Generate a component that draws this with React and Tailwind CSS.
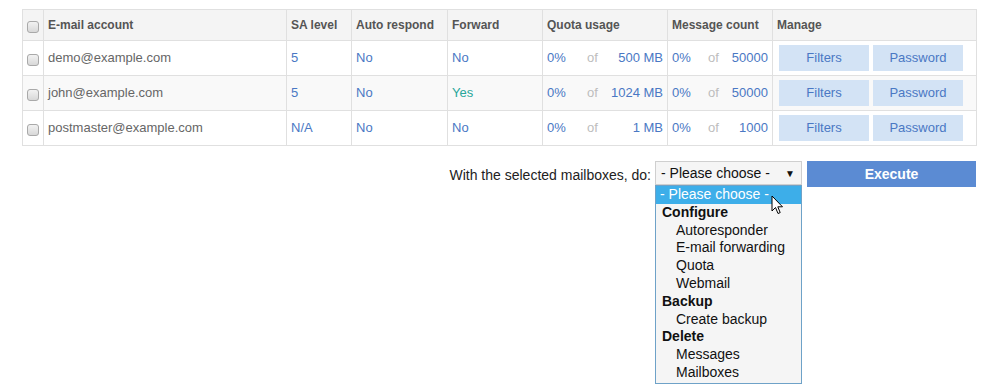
import { useState } from "react"

const mailboxes = [
  { id: 1, email: "demo@example.com", sa: "5", auto: "No", fwd: "No", quota: "500 MB", msgs: "50000" },
  { id: 2, email: "john@example.com", sa: "5", auto: "No", fwd: "Yes", quota: "1024 MB", msgs: "50000" },
  { id: 3, email: "postmaster@example.com", sa: "N/A", auto: "No", fwd: "No", quota: "1 MB", msgs: "1000" },
]

const options = [
  { label: "- Please choose -", type: "active" },
  { label: "Configure", type: "group" },
  { label: "Autoresponder", type: "item" },
  { label: "E-mail forwarding", type: "item" },
  { label: "Quota", type: "item" },
  { label: "Webmail", type: "item" },
  { label: "Backup", type: "group" },
  { label: "Create backup", type: "item" },
  { label: "Delete", type: "group" },
  { label: "Messages", type: "item" },
  { label: "Mailboxes", type: "item" },
]

function Checkbox() {
  return (
    <input
      type="checkbox"
      className="relative top-[1px] m-0 h-[12px] w-[12px] appearance-none rounded-[3px] border border-[#a9a9a9] bg-gradient-to-b from-[#f2f2f2] to-[#d8d8d8] align-middle"
    />
  )
}

function Usage({ used, total, wide }) {
  return (
    <div className="flex items-center">
      <span className={wide ? "w-[40px]" : "w-[36px]"}>{used}</span>
      <span className="text-[#bdbdbd]">of</span>
      <span className="flex-1 text-right">{total}</span>
    </div>
  )
}

function Cursor() {
  return (
    <svg className="absolute left-[115px] top-[9px]" width="13" height="21" viewBox="0 0 13 21">
      <path
        d="M1 1 L1 16 L4.5 12.5 L7 18.5 L9.2 17.6 L6.8 11.8 L11.5 11.8 Z"
        fill="#fff"
        stroke="#000"
        strokeWidth="1"
        strokeLinejoin="round"
      />
    </svg>
  )
}

export default function App() {
  const [checked] = useState({})

  return (
    <div className="min-h-screen bg-white font-['Liberation_Sans',Arial,sans-serif]">
      <div className="w-[976px] pl-[22px] pt-[9px]">
        <table className="w-[954px] table-fixed border-collapse text-[13px]">
          <colgroup>
            <col className="w-[21px]" />
            <col className="w-[243px]" />
            <col className="w-[65px]" />
            <col className="w-[96px]" />
            <col className="w-[95px]" />
            <col className="w-[125px]" />
            <col className="w-[105px]" />
            <col className="w-[204px]" />
          </colgroup>
          <thead>
            <tr className="h-[31px] bg-[#f4f4f4] text-left text-[12px] font-bold text-[#555]">
              <th className="border border-[#e0e0e0] pl-[4px]">
                <Checkbox />
              </th>
              <th className="border border-[#e0e0e0] px-[4px]">E-mail account</th>
              <th className="border border-[#e0e0e0] px-[4px]">SA level</th>
              <th className="border border-[#e0e0e0] px-[4px]">Auto respond</th>
              <th className="border border-[#e0e0e0] px-[4px]">Forward</th>
              <th className="border border-[#e0e0e0] px-[4px]">Quota usage</th>
              <th className="border border-[#e0e0e0] px-[4px]">Message count</th>
              <th className="border border-[#e0e0e0] px-[4px]">Manage</th>
            </tr>
          </thead>
          <tbody>
            {mailboxes.map((m, i) => (
              <tr key={m.id} className={`h-[35px] ${i % 2 === 1 ? "bg-[#f9f9f9]" : "bg-white"}`}>
                <td className="border border-[#e0e0e0] pl-[4px]">
                  <Checkbox defaultChecked={checked[m.id]} />
                </td>
                <td className="border border-[#e0e0e0] px-[4px] text-[#666]">{m.email}</td>
                <td className="border border-[#e0e0e0] px-[4px] text-[#4a78c4]">{m.sa}</td>
                <td className="border border-[#e0e0e0] px-[4px] text-[#4a78c4]">{m.auto}</td>
                <td
                  className={`border border-[#e0e0e0] px-[4px] ${
                    m.fwd === "Yes" ? "text-[#2aa79b]" : "text-[#4a78c4]"
                  }`}
                >
                  {m.fwd}
                </td>
                <td className="border border-[#e0e0e0] px-[4px] text-[#4a78c4]">
                  <Usage used="0%" total={m.quota} wide />
                </td>
                <td className="border border-[#e0e0e0] px-[4px] text-[#4a78c4]">
                  <Usage used="0%" total={m.msgs} />
                </td>
                <td className="border border-[#e0e0e0] px-[6px]">
                  <div className="flex gap-[4px]">
                    <button className="h-[26px] w-[90px] bg-[#d3e3f5] text-[13px] text-[#4a78c4]">Filters</button>
                    <button className="h-[26px] w-[90px] bg-[#d3e3f5] text-[13px] text-[#4a78c4]">Password</button>
                  </div>
                </td>
              </tr>
            ))}
          </tbody>
        </table>

        <div className="mt-[15px] flex items-start justify-end">
          <span className="mt-[4px] mr-[4px] text-[14px] text-[#222]">With the selected mailboxes, do:</span>
          <div className="relative w-[147px]">
            <div className="flex h-[24px] items-center justify-between border border-[#cfcfcf] bg-[#f5f5f5] pl-[5px] pr-[6px] text-[14px] text-[#111]">
              <span>- Please choose -</span>
              <span className="text-[10px]">▼</span>
            </div>
            <div className="absolute left-0 top-[24px] z-10 w-[147px] border border-[#6ea2c8] bg-[#f5f5f5] pb-[1px] text-[14px] leading-[17.8px] text-[#111]">
              {options.map((o) => (
                <div
                  key={o.label}
                  className={
                    o.type === "active"
                      ? "bg-[#3daee9] pl-[4px] text-white"
                      : o.type === "group"
                        ? "pl-[6px] font-bold"
                        : "pl-[20px]"
                  }
                >
                  {o.label}
                </div>
              ))}
              <Cursor />
            </div>
          </div>
          <button className="ml-[5px] h-[26px] w-[169px] bg-[#5b8bd3] text-[14px] font-bold text-white">Execute</button>
        </div>
      </div>
    </div>
  )
}
